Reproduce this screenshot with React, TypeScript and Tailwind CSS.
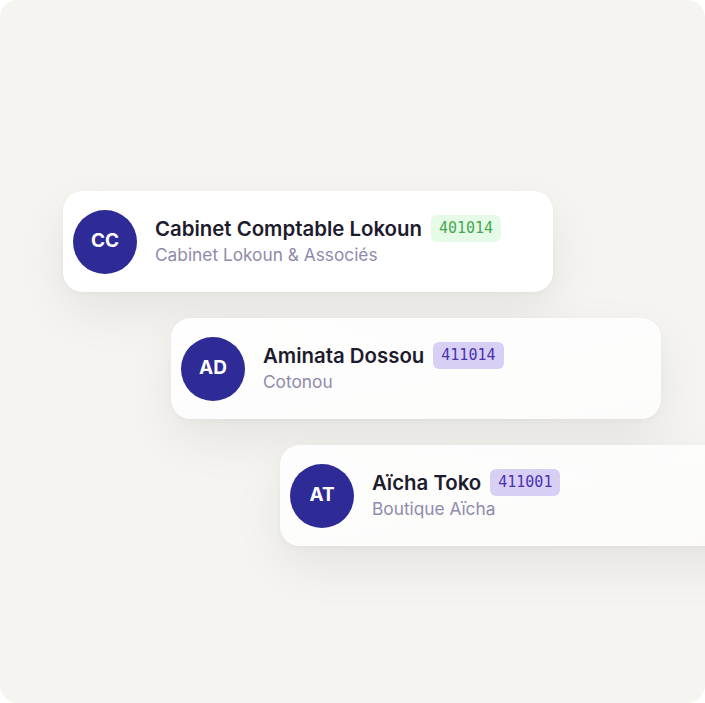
import React from "react";

type Item = {
  initials: string;
  name: string;
  sub: string;
  code: string;
  green?: boolean;
  ml: string;
  bg: string;
};

const items: Item[] = [
  { initials: "CC", name: "Cabinet Comptable Lokoun", sub: "Cabinet Lokoun & Associés", code: "401014", green: true, ml: "ml-[63px]", bg: "bg-white" },
  { initials: "AD", name: "Aminata Dossou", sub: "Cotonou", code: "411014", ml: "ml-[171px]", bg: "bg-gradient-to-br from-white/95 to-white/75" },
  { initials: "AT", name: "Aïcha Toko", sub: "Boutique Aïcha", code: "411001", ml: "ml-[280px]", bg: "bg-gradient-to-br from-white/90 to-white/65" },
];

function Card({ it }: { it: Item }) {
  return (
    <div
      className={`${it.ml} ${it.bg} w-[490px] h-[101px] shrink-0 rounded-[20px] flex items-center pl-[10px] gap-[18px] shadow-[0_20px_50px_rgba(0,0,0,0.07),0_2px_6px_rgba(0,0,0,0.03)]`}
    >
      <div className="w-16 h-16 rounded-full bg-[#2e2a96] flex items-center justify-center text-white text-[19px] font-bold shrink-0">
        {it.initials}
      </div>
      <div className="flex flex-col -mt-[1px]">
        <div className="flex items-center gap-[9px]">
          <span className="text-[20.4px] font-semibold text-[#1d1b2e] leading-[26px]">{it.name}</span>
          <span
            className={`px-[8px] h-[27px] flex items-center rounded-[6px] text-[15px] ${
              it.green ? "bg-[#e6fae8] text-[#45a84f]" : "bg-[#d8cff5] text-[#4a32b0]"
            }`}
            style={{ fontFamily: '"DejaVu Sans Mono", "Liberation Mono", monospace' }}
          >
            {it.code}
          </span>
        </div>
        <span className="text-[17.3px] text-[#8f8aab] leading-[24px] mt-[1px]">{it.sub}</span>
      </div>
    </div>
  );
}

export default function App() {
  return (
    <div className="w-[705px] h-[703px] bg-white" style={{ fontFamily: "Inter, 'Noto Sans', sans-serif" }}>
      <div className="w-full h-full rounded-[18px] bg-[#f5f4f0] overflow-hidden flex flex-col pt-[191px] gap-[26px]">
        {items.map((it) => (
          <Card key={it.code} it={it} />
        ))}
      </div>
    </div>
  );
}
